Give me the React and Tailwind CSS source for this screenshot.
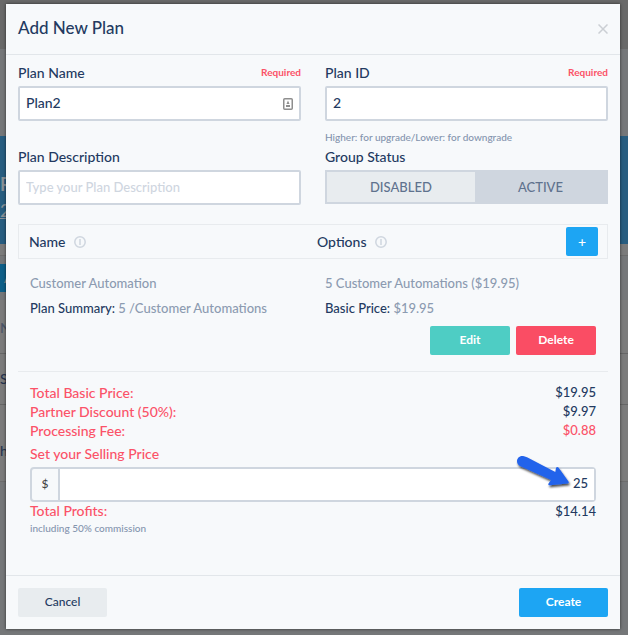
import { useState } from 'react';

const totals = [
  { label: 'Total Basic Price:', value: '$19.95' },
  { label: 'Partner Discount (50%):', value: '$9.97' },
  { label: 'Processing Fee:', value: '$0.88', negative: true },
];

function InfoIcon() {
  return (
    <svg viewBox="0 0 12 12" className="h-3 w-3" fill="none" stroke="#cfd6df" aria-hidden="true">
      <circle cx="6" cy="6" r="5.2" strokeWidth="1.5" />
      <path d="M6 3v6" strokeWidth="1.5" />
    </svg>
  );
}

function ContactIcon() {
  return (
    <svg viewBox="0 0 10 12" className="h-3 w-2.5" aria-hidden="true">
      <rect x="0.75" y="0.75" width="8.5" height="10.5" rx="1" fill="#fff" stroke="#8e8e8e" strokeWidth="1.5" />
      <path d="M5 2.500l1.500 3.500H3.500zM3 7h4v2H3z" fill="#8e8e8e" />
    </svg>
  );
}

function Arrow() {
  return (
    <svg
      viewBox="0 0 58 42"
      className="pointer-events-none absolute -top-3.5 right-5 h-[42px] w-[58px]"
      aria-hidden="true"
    >
      <defs>
        <filter id="arrow-shadow" x="-20%" y="-20%" width="150%" height="160%">
          <feDropShadow dx="1" dy="2" stdDeviation="1" floodColor="#000" floodOpacity="0.7" />
        </filter>
      </defs>
      <path
        d="M8 1.200C4 0 1 3 1 6.200C1 8.500 2.500 10.300 4.500 11.300L35 25L32.500 28.500Q31.500 30.300 34 30.300L51.500 28.600Q53.500 28 52.300 26.200L42.500 12.600Q41 11 40 13L39.300 17L11 2.300Q9.500 1.500 8 1.200Z"
        fill="#2463eb"
        filter="url(#arrow-shadow)"
      />
    </svg>
  );
}

function Field({ id, label, required, hint, children }) {
  return (
    <div>
      <div className="mb-[3px] flex justify-between leading-5">
        <label htmlFor={id}>{label}</label>
        {required && <span className="text-[10px] leading-[18px] font-bold text-[#fb5268]">Required</span>}
      </div>
      {children}
      {hint && <p className="mt-1.5 text-[10px] leading-5 text-[#8494ae]">{hint}</p>}
    </div>
  );
}

// Dimmed page behind the dialog
function Backdrop() {
  return (
    <div className="min-h-screen overflow-hidden bg-[#757779] text-[#26344f]" aria-hidden="true">
      <div className="h-[49px] bg-[#696969]" />
      <div className="h-[87px]" />
      <div className="h-[108px] bg-[#285d80] pt-9 text-[#8a9197]">
        <p className="text-lg leading-6 font-bold">R</p>
        <p className="text-lg leading-7 underline">2</p>
      </div>
      <div className="h-3 border-b border-[#6c6c6c] bg-[#7b7b7b]" />
      <div className="h-[44px] pt-2">
        <div className="h-7 w-20 bg-[#0e5f88] pl-1 text-sm leading-7 text-[#8a9197]">A</div>
      </div>
      <div className="bg-[#7b7b7b]">
        <p className="h-[54px] border-b border-[#666] text-sm leading-[56px] text-[#4b5568]">N</p>
        <p className="h-[51px] border-b border-[#666] text-sm leading-[50px]">S</p>
        <p className="h-[77px] border-b border-[#6c6c6c] text-sm leading-[92px]">h</p>
      </div>
    </div>
  );
}

export default function App() {
  const [name, setName] = useState('Plan2');
  const [planId, setPlanId] = useState('2');
  const [description, setDescription] = useState('');
  const [active, setActive] = useState(true);
  const [price, setPrice] = useState('25');

  const input =
    'h-[35px] w-full rounded-xs border-2 border-[#cfd6df] bg-white px-1.5 pb-0.5 outline-none placeholder:text-[13px] placeholder:text-[#cfd6df]';

  return (
    <div className="relative font-[Lato,sans-serif] text-sm font-medium text-[#233a61]">
      <Backdrop />
      <div className="absolute inset-x-0 top-0 pt-1 pr-2 pl-1.5">
        <div
          role="dialog"
          aria-labelledby="dialog-title"
          className="bg-[#f7f9fb] shadow-[0_0_3px_rgba(0,0,0,0.6)]"
        >
          <header className="flex h-[51px] items-center justify-between border-b border-[#e2e6ea] px-3">
            <h1 id="dialog-title" className="pb-0.5 text-[17px]">
              Add New Plan
            </h1>
            <button type="button" aria-label="Close">
              <svg viewBox="0 0 10 10" className="h-2.5 w-2.5" stroke="#cbcfd4" strokeWidth="1.5">
                <path d="M0.500 0.500l9 9M9.500 0.500l-9 9" />
              </svg>
            </button>
          </header>

          <div className="px-3 pt-2 pb-[38px]">
            <div className="grid grid-cols-2 gap-x-6">
              <Field id="plan-name" label="Plan Name" required>
                <div className="relative">
                  <input id="plan-name" className={input} value={name} onChange={(e) => setName(e.target.value)} />
                  <span className="absolute inset-y-0 right-2 flex items-center">
                    <ContactIcon />
                  </span>
                </div>
              </Field>
              <Field id="plan-id" label="Plan ID" required hint="Higher: for upgrade/Lower: for downgrade">
                <input id="plan-id" className={input} value={planId} onChange={(e) => setPlanId(e.target.value)} />
              </Field>
              <Field id="plan-description" label="Plan Description">
                <input
                  id="plan-description"
                  className={input}
                  placeholder="Type your Plan Description"
                  value={description}
                  onChange={(e) => setDescription(e.target.value)}
                />
              </Field>
              <Field id="status-disabled" label="Group Status">
                <div className="flex h-[34px] border-2 border-[#cfd6df] text-[13px] text-[#5f728e]">
                  <button
                    id="status-disabled"
                    type="button"
                    onClick={() => setActive(false)}
                    className={`w-[53%] ${active ? 'bg-[#e8ecef]' : 'bg-[#cfd6df]'}`}
                  >
                    DISABLED
                  </button>
                  <button
                    type="button"
                    onClick={() => setActive(true)}
                    className={`flex-1 ${active ? 'bg-[#cfd6df]' : 'bg-[#e8ecef]'}`}
                  >
                    ACTIVE
                  </button>
                </div>
              </Field>
            </div>

            <table className="mt-[19px] w-full table-fixed border-separate border-spacing-0 text-left">
              <thead>
                <tr>
                  <th className="border-y border-l border-[#e8ebee] py-0.5 pl-2.5 font-medium">
                    <div className="flex items-center gap-2">
                      Name <InfoIcon />
                    </div>
                  </th>
                  <th className="border-y border-r border-[#e8ebee] py-0.5 pr-[9px] pl-1 font-medium">
                    <div className="flex items-center gap-2">
                      Options <InfoIcon />
                      <button
                        type="button"
                        aria-label="Add option"
                        className="ml-auto h-[29px] w-8 rounded-xs bg-[#1da5f3] text-white"
                      >
                        +
                      </button>
                    </div>
                  </th>
                </tr>
              </thead>
              <tbody className="text-[13px] leading-[25px] text-[#8c9bb1]">
                <tr>
                  <td className="pt-3 pl-3">Customer Automation</td>
                  <td className="pt-3 pl-3">5 Customer Automations ($19.95)</td>
                </tr>
                <tr>
                  <td className="pl-3">
                    <span className="text-[#233a61]">Plan Summary:</span> 5 /Customer Automations
                  </td>
                  <td className="pl-3">
                    <span className="text-[#233a61]">Basic Price:</span> $19.95
                  </td>
                </tr>
              </tbody>
            </table>

            <div className="flex justify-end gap-1.5 border-b border-[#e8ebee] px-3 pt-[5px] pb-4 text-xs font-bold text-white">
              <button type="button" className="h-[29px] w-20 rounded-xs bg-[#4ecdc4] pb-0.5">
                Edit
              </button>
              <button type="button" className="h-[29px] w-20 rounded-xs bg-[#fa4d64] pb-0.5">
                Delete
              </button>
            </div>

            <div className="px-3 pt-[11px]">
              <dl className="leading-[19px]">
                {totals.map((row) => (
                  <div key={row.label} className="flex justify-between">
                    <dt className="text-[#fb5268]">{row.label}</dt>
                    <dd className={row.negative ? 'text-[13px] text-[#fb5268]' : 'text-[13px]'}>{row.value}</dd>
                  </div>
                ))}
              </dl>
              <label htmlFor="selling-price" className="block leading-[27px] text-[#fb5268]">
                Set your Selling Price
              </label>
              <div className="relative flex h-[35px] rounded-sm border-2 border-[#cfd6df]">
                <span className="flex w-7 items-center justify-center border-r-2 border-[#cfd6df] pb-0.5 text-xs text-[#444]">
                  $
                </span>
                <input
                  id="selling-price"
                  className="min-w-0 flex-1 bg-white px-1.5 pb-0.5 text-right text-[13px] outline-none"
                  value={price}
                  onChange={(e) => setPrice(e.target.value)}
                />
                <Arrow />
              </div>
              <div className="flex justify-between leading-[18px]">
                <span className="text-[#fb5268]">Total Profits:</span>
                <span className="text-[13px]">$14.14</span>
              </div>
              <p className="text-[10px] leading-[17px] text-[#8494ae]">including 50% commission</p>
            </div>
          </div>

          <footer className="flex justify-between border-t border-[#e2e6ea] p-3 text-xs">
            <button type="button" className="h-[29px] w-[89px] rounded-xs bg-[#e8ecef] pb-0.5">
              Cancel
            </button>
            <button type="button" className="h-[29px] w-[89px] rounded-xs bg-[#1da5f3] pb-0.5 font-bold text-white">
              Create
            </button>
          </footer>
        </div>
      </div>
    </div>
  );
}
